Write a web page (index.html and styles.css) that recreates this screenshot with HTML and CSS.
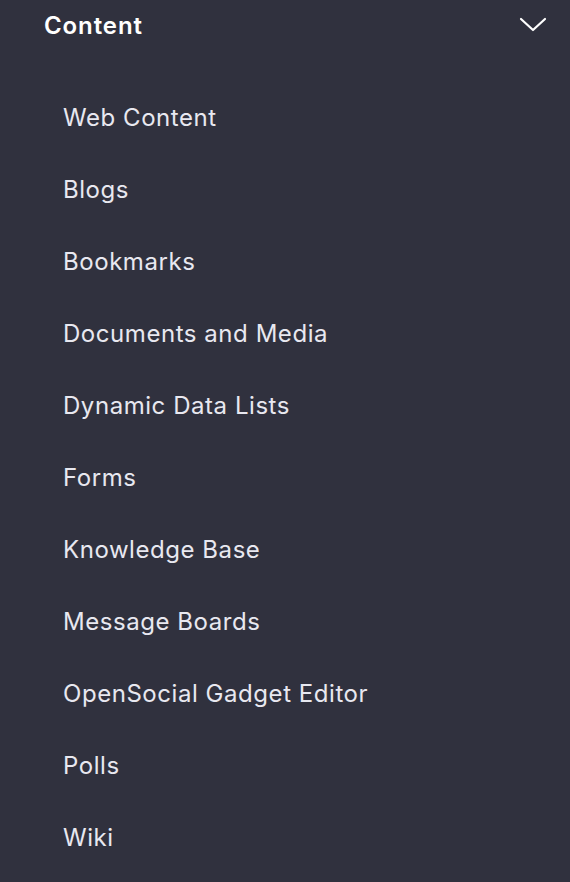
FILE: index.html
```html
<!DOCTYPE html>
<html>
<head>
<meta charset="utf-8">
<link rel="stylesheet" href="styles.css">
</head>
<body>
<div class="panel">
  <div class="header">
    <span class="title">Content</span>
    <svg class="chevron" width="28" height="16" viewBox="0 0 28 16"><path d="M2 2 L14 13 L26 2" fill="none" stroke="#ffffff" stroke-width="2.2" stroke-linecap="round" stroke-linejoin="round"/></svg>
  </div>
  <ul class="list">
    <li>Web Content</li>
    <li>Blogs</li>
    <li>Bookmarks</li>
    <li>Documents and Media</li>
    <li>Dynamic Data Lists</li>
    <li>Forms</li>
    <li>Knowledge Base</li>
    <li>Message Boards</li>
    <li>OpenSocial Gadget Editor</li>
    <li>Polls</li>
    <li>Wiki</li>
  </ul>
</div>
</body>
</html>
```
FILE: styles.css
```css
html, body {
  margin: 0;
  padding: 0;
  background: #30313e;
}
.panel {
  width: 570px;
  height: 882px;
  background: #30313e;
  font-family: Inter, "Noto Sans", sans-serif;
  overflow: hidden;
}
.header {
  display: flex;
  align-items: center;
  justify-content: space-between;
  height: 50px;
  padding: 0 23px 0 44px;
}
.title {
  color: #ffffff;
  font-size: 24px;
  font-weight: 600;
  letter-spacing: 0.9px;
}
.chevron {
  display: block;
}
.list {
  list-style: none;
  margin: 31px 0 0 0;
  padding: 0 0 0 63px;
}
.list li {
  height: 72px;
  display: flex;
  align-items: center;
  color: #e8e8f0;
  font-size: 24px;
  font-weight: 400;
  letter-spacing: 0.55px;
}
```
